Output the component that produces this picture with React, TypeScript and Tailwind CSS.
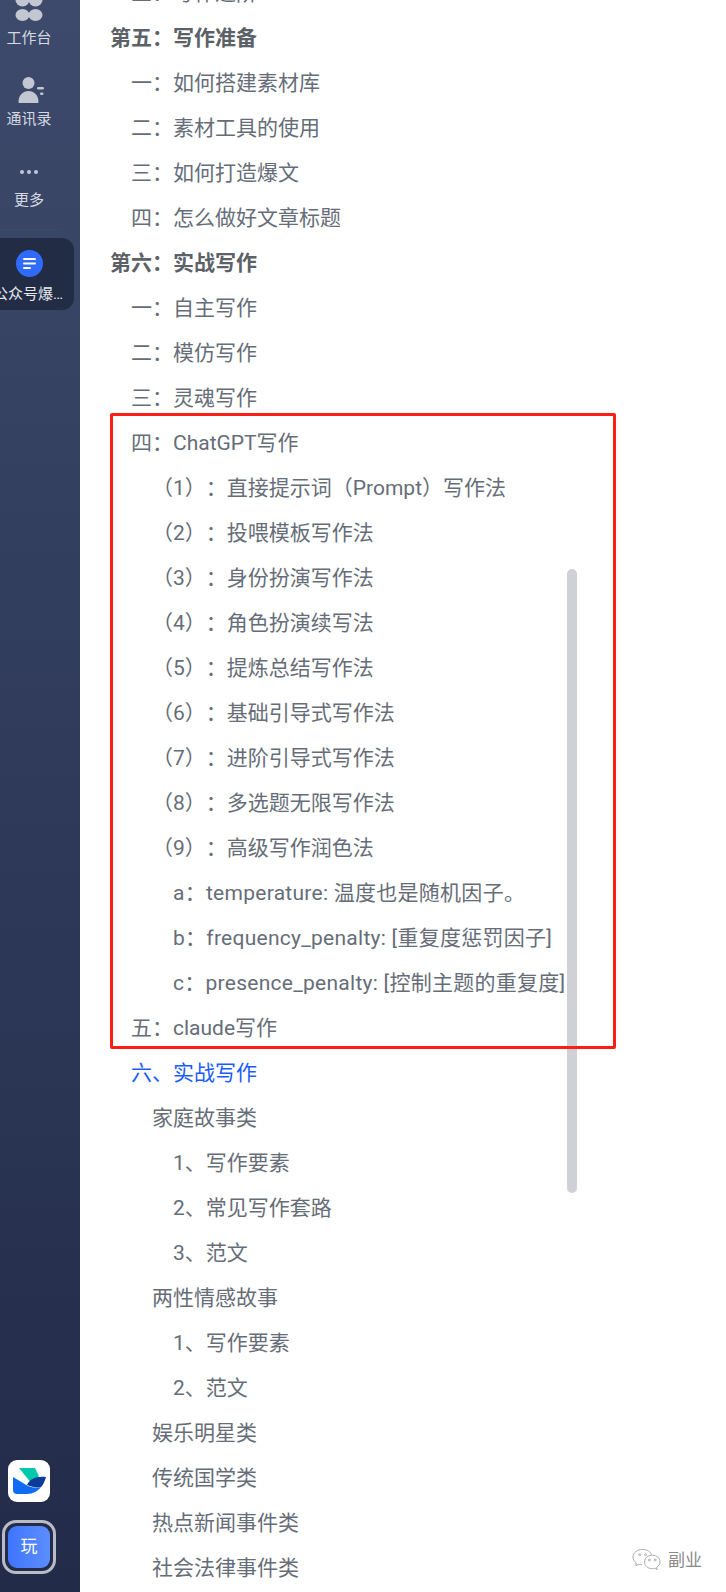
import { ReactNode } from 'react';

const FONT = 'font-["Roboto","Noto_Sans_CJK_SC",sans-serif]';

type Row = { text: string; indent: string; tone?: string };

const L0 = 'pl-[30px] font-bold text-[#5c6167]';
const L1 = 'pl-[51px]';
const L2 = 'pl-[72px]';
const L3 = 'pl-[93px]';
const WIDE = 'tracking-[0.27px]';

const rows: Row[] = [
  { text: '三：写作进阶', indent: L1 },
  { text: '第五：写作准备', indent: L0 },
  { text: '一：如何搭建素材库', indent: L1 },
  { text: '二：素材工具的使用', indent: L1 },
  { text: '三：如何打造爆文', indent: L1 },
  { text: '四：怎么做好文章标题', indent: L1 },
  { text: '第六：实战写作', indent: L0 },
  { text: '一：自主写作', indent: L1 },
  { text: '二：模仿写作', indent: L1 },
  { text: '三：灵魂写作', indent: L1 },
  { text: '四：ChatGPT写作', indent: L1 },
  { text: '（1）：直接提示词（Prompt）写作法', indent: L2 },
  { text: '（2）：投喂模板写作法', indent: L2 },
  { text: '（3）：身份扮演写作法', indent: L2 },
  { text: '（4）：角色扮演续写法', indent: L2 },
  { text: '（5）：提炼总结写作法', indent: L2 },
  { text: '（6）：基础引导式写作法', indent: L2 },
  { text: '（7）：进阶引导式写作法', indent: L2 },
  { text: '（8）：多选题无限写作法', indent: L2 },
  { text: '（9）：高级写作润色法', indent: L2 },
  { text: 'a：temperature: 温度也是随机因子。', indent: L3, tone: WIDE },
  { text: 'b：frequency_penalty: [重复度惩罚因子]', indent: L3, tone: WIDE },
  { text: 'c：presence_penalty: [控制主题的重复度]', indent: L3, tone: WIDE },
  { text: '五：claude写作', indent: L1 },
  { text: '六、实战写作', indent: L1, tone: 'text-[#1a5cff]' },
  { text: '家庭故事类', indent: L2 },
  { text: '1、写作要素', indent: L3 },
  { text: '2、常见写作套路', indent: L3 },
  { text: '3、范文', indent: L3 },
  { text: '两性情感故事', indent: L2 },
  { text: '1、写作要素', indent: L3 },
  { text: '2、范文', indent: L3 },
  { text: '娱乐明星类', indent: L2 },
  { text: '传统国学类', indent: L2 },
  { text: '热点新闻事件类', indent: L2 },
  { text: '社会法律事件类', indent: L2 },
];

function NavItem({ icon, label }: { icon: ReactNode; label: string }) {
  return (
    <div className="flex h-[81px] flex-col items-center">
      {icon}
      <span className="text-[15px] leading-[20px] text-[#d5d9e3]">{label}</span>
    </div>
  );
}

function Sidebar() {
  return (
    <aside className="flex h-full w-[80px] shrink-0 flex-col overflow-hidden bg-gradient-to-b from-[#3d4a6b] via-[#2f3a5a] to-[#222b48]">
      <div className="-mt-[20px] -ml-[16px] w-[90px]">
        <NavItem
          label="工作台"
          icon={
            <svg width="48" height="48" viewBox="0 0 48 48" fill="#c3c7d2">
              <ellipse cx="17.5" cy="20" rx="7" ry="6.5" />
              <ellipse cx="30.5" cy="20" rx="7" ry="6.5" />
              <ellipse cx="17.5" cy="35" rx="7" ry="6" />
              <ellipse cx="30.5" cy="35" rx="7" ry="6" />
            </svg>
          }
        />
        <NavItem
          label="通讯录"
          icon={
            <svg width="48" height="48" viewBox="0 0 48 48" fill="#c3c7d2">
              <circle cx="23.5" cy="22" r="6" />
              <path d="M13.500 41c0-7 4.500-11 10-11s10 4 10 11c0 .6-.4 1-1 1h-18c-.6 0-1-.4-1-1z" />
              <rect x="32" y="26" width="7" height="2.600" rx="1.300" />
              <rect x="35" y="31.500" width="3.500" height="2.600" rx="1.300" />
            </svg>
          }
        />
        <NavItem
          label="更多"
          icon={
            <svg width="48" height="48" viewBox="0 0 48 48" fill="#c3c7d2">
              <circle cx="17" cy="30" r="2" />
              <circle cx="24" cy="30" r="2" />
              <circle cx="31" cy="30" r="2" />
            </svg>
          }
        />
      </div>
      <div className="mt-[6px] h-px w-[62px] bg-[#3f4a68]" />
      <div className="-ml-[16px] mt-[8px] flex h-[72px] w-[90px] flex-col items-center rounded-[12px] bg-[#232c45] px-[9px] pt-[12px]">
        <div className="flex h-[27px] w-[27px] shrink-0 items-center justify-center rounded-full bg-[#2f6bff]">
          <svg width="13" height="11" viewBox="0 0 13 11" fill="#fff">
            <rect x="0" y="0" width="13" height="2" rx="1" />
            <rect x="0" y="4.500" width="13" height="2" rx="1" />
            <rect x="0" y="9" width="8" height="2" rx="1" />
          </svg>
        </div>
        <div className="mt-[7px] w-full truncate text-center text-[15px] leading-[20px] text-[#e6e9f0]">
          公众号爆文写作
        </div>
      </div>
      <div className="mt-auto flex flex-col items-center pr-[22px] pb-[18px]">
        <div className="flex h-[42px] w-[42px] items-center justify-center rounded-[9px] bg-white">
          <svg width="42" height="42" viewBox="0 0 42 42">
            <path d="M11 8h16l4 8-7 8z" fill="#00c9ab" />
            <path d="M5 17l15 9c5 2 10 2 13 1-3 4-8 7-14 7H9c-2.500 0-4-1.500-4-4z" fill="#0f6cf2" />
            <path d="M19 25c3-6 8-9 19-8-1 4-3 8-5 10-4 1-9 0-14-2z" fill="#0b3c9c" />
          </svg>
        </div>
        <div className="mt-[18px] rounded-[14px] border-[3px] border-[#b9bcc6] p-[3px]">
          <div className="flex h-[42px] w-[42px] items-center justify-center rounded-[9px] bg-gradient-to-r from-[#3f75ff] to-[#5c8dff] text-[17px] text-white">
            玩
          </div>
        </div>
      </div>
    </aside>
  );
}

export default function App() {
  return (
    <div className={`relative flex h-[1592px] w-[726px] overflow-hidden bg-white ${FONT}`}>
      <Sidebar />
      <main className="-mt-[29px] flex-1 text-[21px] leading-[45px] text-[#666d78] [text-spacing-trim:space-all]">
        {rows.map((row, i) => (
          <div key={i} className={`whitespace-nowrap ${row.indent} ${row.tone ?? ''}`}>
            {row.text}
          </div>
        ))}
      </main>

      {/* 滚动条 */}
      <div className="absolute top-[569px] left-[567px] h-[624px] w-[10px] rounded-full bg-[#d0d1d6]" />

      {/* 红色标注框 */}
      <div className="absolute top-[413px] left-[110px] h-[636px] w-[506px] rounded-[2px] border-[3px] border-[#fa1e14]" />

      {/* 公众号水印 */}
      <div className="absolute top-[1546px] left-[632px] flex items-center gap-[7px] text-[17px] leading-[28px] text-[#8a8a8a]">
        <svg width="29" height="26" viewBox="0 0 30 26" fill="none" stroke="#a8a8a8" strokeWidth="1">
          <path d="M11 2C5.500 2 1 5.500 1 10c0 2.500 1.400 4.600 3.500 6L4 19l3-1.700c1 .3 2 .5 3 .5" />
          <path d="M21 8c-4.500 0-8 3-8 7s3.500 7 8 7c1 0 1.800-.2 2.600-.4L26 23l-.5-2.500c2-1.300 3.500-3.300 3.500-5.500 0-4-3.500-7-8-7z" />
          <path d="M20 7.500C19.300 4.300 15.500 2 11 2" />
          <circle cx="8" cy="7.500" r="1" />
          <circle cx="14" cy="7.500" r="1" />
          <circle cx="18" cy="13" r="1" />
          <circle cx="24" cy="13" r="1" />
        </svg>
        <span>副业</span>
      </div>
    </div>
  );
}
